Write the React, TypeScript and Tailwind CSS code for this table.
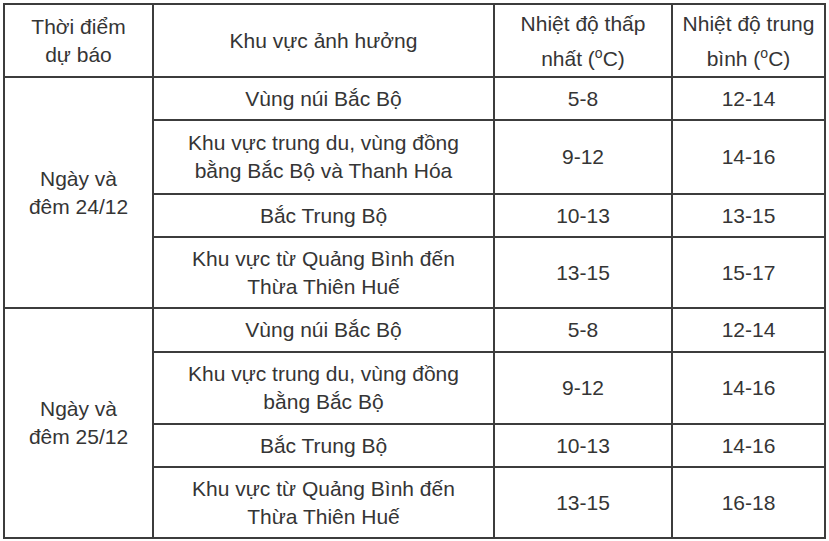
import React from "react";

type Row = { area: string[]; min: string; avg: string; h: string };

const groups: { label: string[]; rows: Row[] }[] = [
  {
    label: ["Ngày và", "đêm 24/12"],
    rows: [
      { area: ["Vùng núi Bắc Bộ"], min: "5-8", avg: "12-14", h: "h-[43px]" },
      { area: ["Khu vực trung du, vùng đồng", "bằng Bắc Bộ và Thanh Hóa"], min: "9-12", avg: "14-16", h: "h-[74px]" },
      { area: ["Bắc Trung Bộ"], min: "10-13", avg: "13-15", h: "h-[43px]" },
      { area: ["Khu vực từ Quảng Bình đến", "Thừa Thiên Huế"], min: "13-15", avg: "15-17", h: "h-[71px]" },
    ],
  },
  {
    label: ["Ngày và", "đêm 25/12"],
    rows: [
      { area: ["Vùng núi Bắc Bộ"], min: "5-8", avg: "12-14", h: "h-[44px]" },
      { area: ["Khu vực trung du, vùng đồng", "bằng Bắc Bộ"], min: "9-12", avg: "14-16", h: "h-[72px]" },
      { area: ["Bắc Trung Bộ"], min: "10-13", avg: "14-16", h: "h-[43px]" },
      { area: ["Khu vực từ Quảng Bình đến", "Thừa Thiên Huế"], min: "13-15", avg: "16-18", h: "h-[71px]" },
    ],
  },
];

const cell = "border-2 border-[#3c3c3c] text-center align-middle p-0";
const tempHead = "border-2 border-[#3c3c3c] text-center align-top pt-[5px] px-0 pb-0 font-normal";

function Lines({ lines }: { lines: string[] }) {
  return (
    <>
      {lines.map((l, i) => (
        <div key={i}>{l}</div>
      ))}
    </>
  );
}

function Deg() {
  return <span className="relative -top-[8px] text-[14px]">o</span>;
}

export default function App() {
  return (
    <div className="w-[829px] h-[541px] bg-white pl-[3px] pt-[3px] overflow-hidden">
      <table
        className="table-fixed border-collapse w-[821px] text-[21px] leading-[28px] text-[#353535]"
        style={{ fontFamily: '"Liberation Sans", Arial, sans-serif' }}
      >
        <colgroup>
          <col className="w-[149px]" />
          <col className="w-[341px]" />
          <col className="w-[178px]" />
          <col className="w-[153px]" />
        </colgroup>
        <thead>
          <tr className="h-[73px]">
            <th className={cell + " font-normal"}>
              <Lines lines={["Thời điểm", "dự báo"]} />
            </th>
            <th className={cell + " font-normal"}>Khu vực ảnh hưởng</th>
            <th className={tempHead}>
              <div>Nhiệt độ thấp</div>
              <div className="mt-[7px]">
                nhất (<Deg />C)
              </div>
            </th>
            <th className={tempHead}>
              <div>Nhiệt độ trung</div>
              <div className="mt-[7px]">
                bình (<Deg />C)
              </div>
            </th>
          </tr>
        </thead>
        <tbody>
          {groups.map((g) =>
            g.rows.map((r, i) => (
              <tr key={g.label[1] + i} className={r.h}>
                {i === 0 && (
                  <td rowSpan={g.rows.length} className={cell}>
                    <Lines lines={g.label} />
                  </td>
                )}
                <td className={cell}>
                  <Lines lines={r.area} />
                </td>
                <td className={cell}>{r.min}</td>
                <td className={cell}>{r.avg}</td>
              </tr>
            ))
          )}
        </tbody>
      </table>
    </div>
  );
}
